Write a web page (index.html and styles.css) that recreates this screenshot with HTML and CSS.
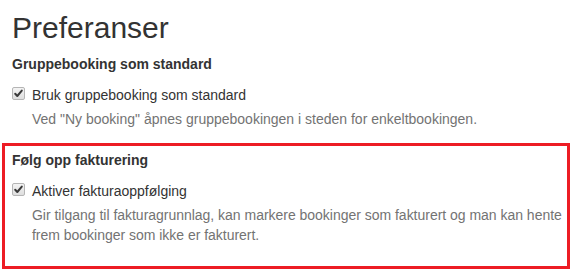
FILE: index.html
```html
<!DOCTYPE html>
<html lang="no">
<head>
<meta charset="utf-8">
<title>Preferanser</title>
<link rel="stylesheet" href="styles.css">
</head>
<body>
<div class="page">
  <h2 class="title">Preferanser</h2>

  <section class="pref">
    <h4 class="pref-title">Gruppebooking som standard</h4>
    <div class="check-row">
      <span class="check" aria-hidden="true">
        <svg viewBox="0 0 13 13" width="13" height="13"><path d="M3.2 6.8 L5.3 9 L9.8 3.6" fill="none" stroke="#3a3a3a" stroke-width="2" stroke-linecap="round" stroke-linejoin="round"/></svg>
      </span>
      <span class="check-label">Bruk gruppebooking som standard</span>
    </div>
    <p class="help">Ved "Ny booking" åpnes gruppebookingen i steden for enkeltbookingen.</p>
  </section>

  <section class="pref pref-highlight">
    <h4 class="pref-title">Følg opp fakturering</h4>
    <div class="check-row">
      <span class="check" aria-hidden="true">
        <svg viewBox="0 0 13 13" width="13" height="13"><path d="M3.2 6.8 L5.3 9 L9.8 3.6" fill="none" stroke="#3a3a3a" stroke-width="2" stroke-linecap="round" stroke-linejoin="round"/></svg>
      </span>
      <span class="check-label">Aktiver fakturaoppfølging</span>
    </div>
    <p class="help">Gir tilgang til fakturagrunnlag, kan markere bookinger som fakturert og man kan hente frem bookinger som ikke er fakturert.</p>
  </section>
</div>
</body>
</html>
```

FILE: styles.css
```css
html, body {
  margin: 0;
  padding: 0;
  background: #ffffff;
}

body {
  font-family: "Liberation Sans", Arial, Helvetica, sans-serif;
  font-size: 14px;
  line-height: 20px;
  color: #333333;
}

.page {
  padding: 0 12px;
}

.title {
  margin: 11px 0 0;
  font-size: 30px;
  font-weight: 400;
  line-height: 33px;
  color: #333333;
}

.pref {
  margin-top: 10px;
}

.pref-title {
  margin: 0;
  font-size: 14px;
  font-weight: 700;
  line-height: 20px;
}

.check-row {
  display: flex;
  align-items: flex-start;
  margin-top: 11px;
}

.check {
  flex: none;
  display: block;
  width: 13px;
  height: 13px;
  margin-top: 2px;
  margin-right: 7px;
  box-sizing: border-box;
  border: 1px solid #b5b5b5;
  border-radius: 2px;
  background: linear-gradient(#f4f4f4, #dedede);
}

.check svg {
  display: block;
  margin: -1px;
}

.check-label {
  color: #333333;
}

.help {
  margin: 4px 0 0;
  padding-left: 20px;
  color: #737373;
}

.pref-highlight {
  margin: 14px -8px 0 -10px;
  padding: 4px 0 21px 7px;
  border: 3px solid #ed1c24;
}

.pref-highlight .help {
  letter-spacing: -0.02px;
}
```
